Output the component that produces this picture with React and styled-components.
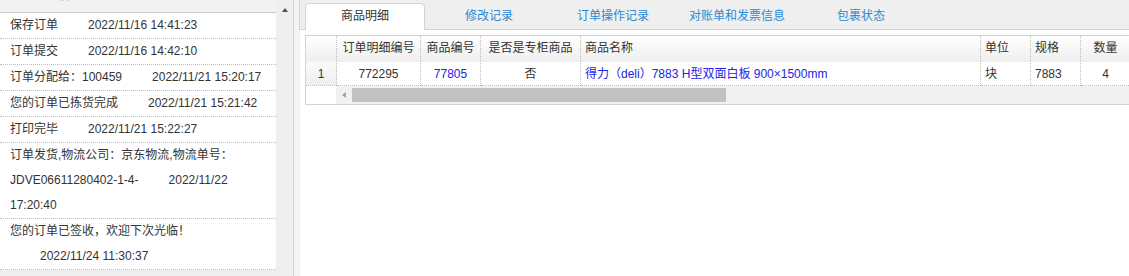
import React from "react";
import styled, { createGlobalStyle } from "styled-components";

const GlobalStyle = createGlobalStyle`
  html, body {
    margin: 0;
    padding: 0;
    background: #f0f0f0;
    overflow: hidden;
  }
  body {
    font-family: "Liberation Sans", Arial, "Noto Sans CJK SC", sans-serif;
    font-size: 12px;
    color: #333;
    text-spacing-trim: space-all;
    font-feature-settings: "fwid" 1;
  }
  * { box-sizing: border-box; }
`;

const Page = styled.div`
  display: flex;
  height: 276px;
  width: 1129px;
  overflow: hidden;
`;

const LeftPanel = styled.div`
  width: 276px;
  flex: none;
  display: flex;
  flex-direction: column;
  background: #efefef;
`;

const LogHeader = styled.div`
  height: 13px;
  background: #f2f2f2;
  border-bottom: 1px solid #c9c9c9;
  overflow: hidden;
  padding: 0 10px;
`;

const LogTitle = styled.div`
  margin-top: -12px;
  line-height: 14px;
  font-weight: bold;
  color: #2b3f6a;
`;

const LogList = styled.div`
  background: #fff;
`;

const LogRow = styled.div`
  padding: 0 10px;
  line-height: 25px;
  border-bottom: 1px dotted #bdbdbd;
  color: #333;
`;

const LogTime = styled.span`
  margin-left: 30px;
`;

const ScrollTrack = styled.div`
  width: 17px;
  flex: none;
  background: #efefef;
  display: flex;
  justify-content: center;
  padding-top: 8px;
`;

const UpArrow = styled.div`
  width: 0;
  height: 0;
  border-left: 3.5px solid transparent;
  border-right: 3.5px solid transparent;
  border-bottom: 4px solid #505050;
`;

const Splitter = styled.div`
  width: 6px;
  flex: none;
  background: #f4f4f4;
  border-left: 1px solid #d4d4d4;
`;

const RightPanel = styled.div`
  flex: 1;
  min-width: 0;
  display: flex;
  flex-direction: column;
  background: #fff;
  overflow: hidden;
`;

const TabBar = styled.div`
  height: 30px;
  flex: none;
  display: flex;
  align-items: flex-end;
  gap: 4px;
  padding-left: 5px;
  background: #efefef;
  border-left: 1px solid #d3d3d3;
  border-bottom: 1px solid #d3d3d3;
`;

const Tab = styled.div`
  width: 120px;
  height: 27px;
  margin-bottom: -1px;
  flex: none;
  text-align: center;
  line-height: 25px;
  font-size: 12px;
  border: 1px solid ${(p) => (p.$active ? "#d3d3d3" : "transparent")};
  border-bottom: none;
  border-radius: 4px 4px 0 0;
  background: ${(p) => (p.$active ? "#fff" : "transparent")};
  color: ${(p) => (p.$active ? "#333" : "#2a8ad4")};
`;

const Content = styled.div`
  flex: 1;
  padding: 5px 0 0 5px;
  border-left: 1px solid #f0f0f0;
`;

const Grid = styled.div`
  width: 832px;
  border: 1px solid #d3d3d3;
  border-right: none;
`;

const Row = styled.div`
  display: grid;
  grid-template-columns: 31px 84px 60px 100px 400px 50px 50px 50px;
`;

const HeadCell = styled.div`
  height: 25px;
  line-height: 25px;
  padding: 0 ${(p) => (p.$center ? "0" : "4px")};
  text-align: ${(p) => (p.$center ? "center" : "left")};
  white-space: nowrap;
  overflow: hidden;
  background: linear-gradient(#ffffff, #efefef);
  border-right: 1px dotted #bdbdbd;
  color: #333;
`;

const Cell = styled.div`
  height: 25px;
  line-height: 24px;
  padding: 0 ${(p) => (p.$center ? "0" : "4px")};
  text-align: ${(p) => (p.$center ? "center" : "left")};
  white-space: nowrap;
  overflow: hidden;
  border-right: 1px dotted #bdbdbd;
  border-bottom: 1px dotted #bdbdbd;
  border-top: 1px solid #f2f2f2;
  color: ${(p) => (p.$link ? "#2323e8" : "#333")};
  background: ${(p) => (p.$num ? "linear-gradient(#fafafa, #efefef)" : "#fff")};
`;

const ScrollRow = styled.div`
  display: flex;
  height: 18px;
`;

const ScrollSpacer = styled.div`
  width: 30px;
  flex: none;
  background: #fff;
`;

const HScroll = styled.div`
  flex: 1;
  display: flex;
  align-items: center;
  background: #f1f1f1;
`;

const LeftButton = styled.div`
  width: 16px;
  height: 18px;
  flex: none;
  display: flex;
  align-items: center;
  justify-content: center;
`;

const LeftArrow = styled.div`
  width: 0;
  height: 0;
  border-top: 3.5px solid transparent;
  border-bottom: 3.5px solid transparent;
  border-right: 4px solid #a3a3a3;
`;

const Thumb = styled.div`
  width: 374px;
  height: 14px;
  background: #c1c1c1;
`;

const logs = [
  { text: "保存订单", time: "2022/11/16 14:41:23" },
  { text: "订单提交", time: "2022/11/16 14:42:10" },
  { text: "订单分配给：100459", time: "2022/11/21 15:20:17" },
  { text: "您的订单已拣货完成", time: "2022/11/21 15:21:42" },
  { text: "打印完毕", time: "2022/11/21 15:22:27" },
  {
    text: "订单发货,物流公司：京东物流,物流单号：JDVE06611280402-1-4-",
    time: "2022/11/22 17:20:40",
  },
  { text: "您的订单已签收，欢迎下次光临！", time: "2022/11/24 11:30:37" },
];

const tabs = ["商品明细", "修改记录", "订单操作记录", "对账单和发票信息", "包裹状态"];

export default function App() {
  return (
    <>
      <GlobalStyle />
      <Page>
        <LeftPanel>
          <LogHeader>
            <LogTitle>订单跟踪信息</LogTitle>
          </LogHeader>
          <LogList>
            {logs.map((l, i) => (
              <LogRow key={i}>
                {l.text}
                <LogTime>{l.time}</LogTime>
              </LogRow>
            ))}
          </LogList>
        </LeftPanel>
        <ScrollTrack>
          <UpArrow />
        </ScrollTrack>
        <Splitter />
        <RightPanel>
          <TabBar>
            {tabs.map((t, i) => (
              <Tab key={t} $active={i === 0}>
                {t}
              </Tab>
            ))}
          </TabBar>
          <Content>
            <Grid>
              <Row>
                <HeadCell $center></HeadCell>
                <HeadCell $center>订单明细编号</HeadCell>
                <HeadCell $center>商品编号</HeadCell>
                <HeadCell $center>是否是专柜商品</HeadCell>
                <HeadCell>商品名称</HeadCell>
                <HeadCell>单位</HeadCell>
                <HeadCell>规格</HeadCell>
                <HeadCell $center>数量</HeadCell>
              </Row>
              <Row>
                <Cell $center $num>1</Cell>
                <Cell $center>772295</Cell>
                <Cell $center $link>77805</Cell>
                <Cell $center>否</Cell>
                <Cell $link>得力（deli）7883 H型双面白板 900×1500mm</Cell>
                <Cell>块</Cell>
                <Cell>7883</Cell>
                <Cell $center>4</Cell>
              </Row>
              <ScrollRow>
                <ScrollSpacer />
                <HScroll>
                  <LeftButton>
                    <LeftArrow />
                  </LeftButton>
                  <Thumb />
                </HScroll>
              </ScrollRow>
            </Grid>
          </Content>
        </RightPanel>
      </Page>
    </>
  );
}
